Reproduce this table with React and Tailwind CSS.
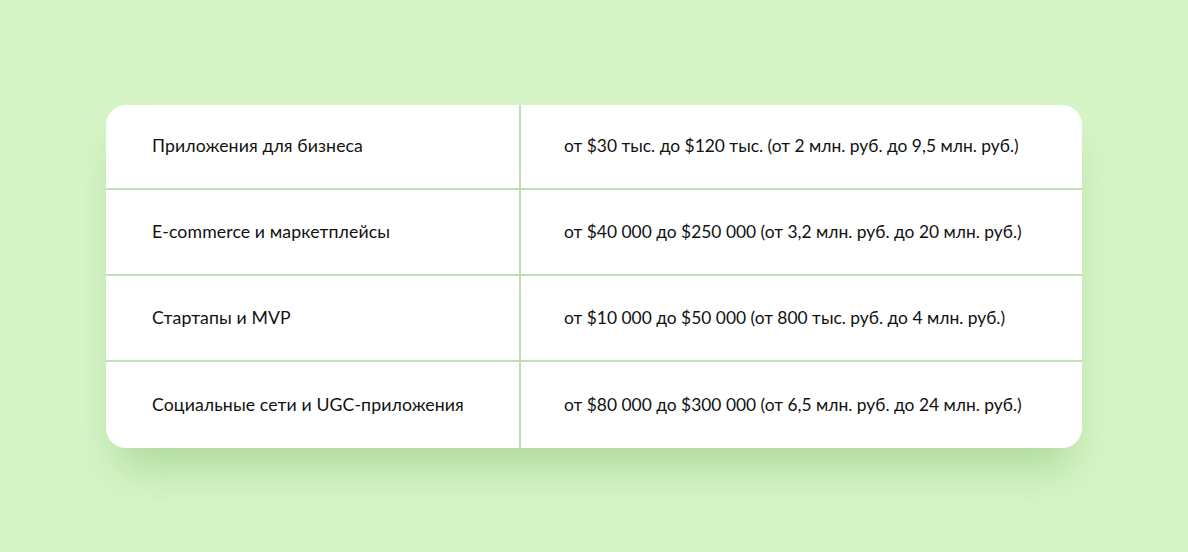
const rows = [
  ['Приложения для бизнеса', 'от $30 тыс. до $120 тыс. (от 2 млн. руб. до 9,5 млн. руб.)'],
  ['E-commerce и маркетплейсы', 'от $40 000 до $250 000 (от 3,2 млн. руб. до 20 млн. руб.)'],
  ['Стартапы и MVP', 'от $10 000 до $50 000 (от 800 тыс. руб. до 4 млн. руб.)'],
  ['Социальные сети и UGC-приложения', 'от $80 000 до $300 000 (от 6,5 млн. руб. до 24 млн. руб.)'],
];

const heights = ['h-[85px] border-b-2', 'h-[86px] border-b-2', 'h-[86px] border-b-2', 'h-[86px]'];

export default function App() {
  return (
    <div className="w-[1188px] h-[552px] bg-[#d6f5c7] flex items-start justify-center pt-[105px] font-['Lato',sans-serif]">
      <div className="w-[976px] bg-white rounded-[20px] shadow-[0_30px_40px_-10px_rgba(150,200,130,0.6)] overflow-hidden">
        {rows.map((r, i) => (
          <div key={i} className={`grid grid-cols-[415px_1fr] border-[#c5deb7] ${heights[i]}`}>
            <div className="flex items-center pl-[46px] border-r-2 border-[#c5deb7] text-[17.7px] text-[#111] tracking-[0.1px]">
              {r[0]}
            </div>
            <div className="flex items-center pl-[43px] text-[17.4px] text-[#111]">{r[1]}</div>
          </div>
        ))}
      </div>
    </div>
  );
}
